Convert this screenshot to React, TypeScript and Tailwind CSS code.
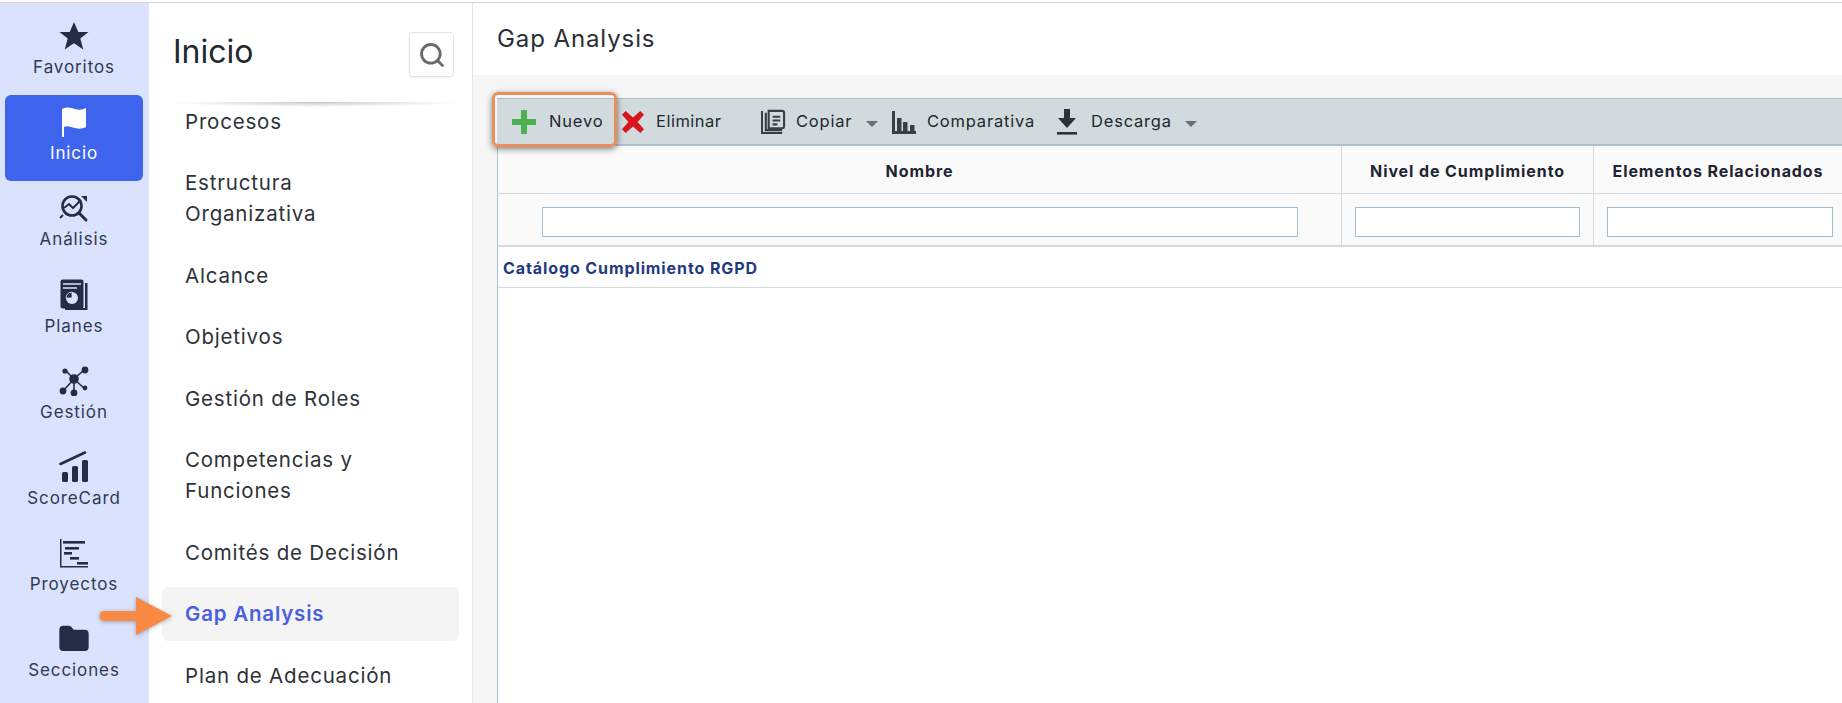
import { Search, Folder } from "lucide-react";

const font = "font-['Inter','Liberation_Sans',sans-serif]";

function StarIcon() {
  return (
    <svg viewBox="0 0 30 30" className="w-[30px] h-[30px]" fill="#252d44">
      <path d="M15 1l4.3 10h10.2l-8.2 6.6L24.300 28.500 15 22.300 5.700 28.500l3-10.900L.5 11h10.200z" />
    </svg>
  );
}

function FlagIcon() {
  return (
    <svg viewBox="0 0 26 32" className="w-[26px] h-[32px]" fill="#fff">
      <path d="M1 3c6-3 9-1 13 0s7 1 11-1v19c-4 2-7 2-11 1S6 19 3 21v10H1z" />
    </svg>
  );
}

function AnalisisIcon() {
  return (
    <svg viewBox="0 0 30 30" className="w-[30px] h-[30px]" fill="none" stroke="#252d44" strokeWidth="2.6">
      <circle cx="13" cy="13" r="9.5" />
      <path d="M20 20l7 7" strokeWidth="3" strokeLinecap="round" />
      <path d="M5 15l5-4 4 4 8-8" strokeWidth="2" />
      <path d="M22 3h6v6z" fill="#252d44" stroke="none" />
      <path d="M4 22l-3 3" strokeWidth="2" />
    </svg>
  );
}

function PlanesIcon() {
  return (
    <svg viewBox="0 0 28 32" className="w-[28px] h-[32px]">
      <path d="M25 4h2.500v27H5v-2h20z" fill="#252d44" />
      <rect x="0.5" y="0.5" width="23" height="29" rx="2" fill="#252d44" />
      <path d="M3 5h18M3 9h14" stroke="#dbe2fd" strokeWidth="1.4" />
      <circle cx="12" cy="19" r="6" fill="#dbe2fd" />
      <path d="M12 19v-6a6 6 0 0 0-6 6z" fill="#252d44" stroke="#dbe2fd" strokeWidth="0.8" />
    </svg>
  );
}

function GestionIcon() {
  return (
    <svg viewBox="0 0 30 30" className="w-[30px] h-[30px]" stroke="#252d44" strokeWidth="1.6" fill="#252d44">
      <path d="M15 13L6 4M15 13L26 3M15 13L4 25M15 13L15 26M15 13L26 23" />
      <circle cx="15" cy="13" r="4" />
      <circle cx="26" cy="4" r="2.6" />
      <circle cx="6" cy="5" r="1.8" />
      <circle cx="4" cy="25" r="2.6" />
      <circle cx="15" cy="27" r="2.6" />
      <circle cx="26" cy="22" r="1.6" />
    </svg>
  );
}

function ScoreIcon() {
  return (
    <svg viewBox="0 0 30 32" className="w-[30px] h-[32px]" fill="#252d44">
      <path d="M1.500 13L26 1.500" stroke="#252d44" strokeWidth="2.6" strokeLinecap="round" />
      <rect x="3" y="21" width="6" height="10" rx="1.5" />
      <rect x="13" y="15" width="6" height="16" rx="1.5" />
      <rect x="23" y="9" width="6" height="22" rx="1.5" />
    </svg>
  );
}

function ProyectosIcon() {
  return (
    <svg viewBox="0 0 30 30" className="w-[30px] h-[30px]" fill="#252d44">
      <path d="M1 1h1.500v27H29v1.500H1z" />
      <rect x="4" y="3" width="22" height="2.6" />
      <rect x="6" y="9" width="14" height="2.6" />
      <rect x="5" y="14" width="8" height="2.6" />
      <rect x="11" y="19" width="9" height="2.6" />
      <rect x="18" y="24" width="11" height="2.6" />
    </svg>
  );
}

const railItems = [
  { label: "Favoritos", icon: <StarIcon /> },
  { label: "Inicio", icon: <FlagIcon />, active: true },
  { label: "Análisis", icon: <AnalisisIcon /> },
  { label: "Planes", icon: <PlanesIcon /> },
  { label: "Gestión", icon: <GestionIcon /> },
  { label: "ScoreCard", icon: <ScoreIcon /> },
  { label: "Proyectos", icon: <ProyectosIcon /> },
  { label: "Secciones", icon: <Folder className="w-[32px] h-[32px]" fill="#252d44" stroke="#252d44" /> },
];

const navItems = [
  "Procesos",
  "Estructura Organizativa",
  "Alcance",
  "Objetivos",
  "Gestión de Roles",
  "Competencias y Funciones",
  "Comités de Decisión",
  "Gap Analysis",
  "Plan de Adecuación",
];

function Caret() {
  return <span className="ml-[14px] w-0 h-0 border-x-[6px] border-x-transparent border-t-[6px] border-t-[#68717a] mt-1" />;
}

function Toolbar() {
  return (
    <div className="relative h-[48px] bg-[#d1dadd] border-y-2 border-[#b0c0ca] border-t-[1px] flex items-center text-[16.5px] tracking-[0.8px] whitespace-nowrap text-[#23272e] pl-[15px]">
      {/* Nuevo */}
      <svg viewBox="0 0 24 24" className="w-[24px] h-[24px]" fill="#4fae4f">
        <path d="M9 0h6v9h9v6h-9v9H9v-9H0V9h9z" />
      </svg>
      <span className="ml-[13px] w-[53px]">Nuevo</span>
      {/* Eliminar */}
      <svg viewBox="0 0 24 24" className="ml-[20px] w-[22px] h-[22px]" fill="#d8141c">
        <path d="M4 0l8 7 8-7 4 4-7 8 7 8-4 4-8-7-8 7-4-4 7-8-7-8z" />
      </svg>
      <span className="ml-[12px] w-[64px] tracking-[0.5px]">Eliminar</span>
      {/* Copiar */}
      <svg viewBox="0 0 26 26" className="ml-[41px] w-[25px] h-[25px]" fill="none" stroke="#3a3f45" strokeWidth="2.2">
        <path d="M8 2h14a2 2 0 0 1 2 2v14a2 2 0 0 1-2 2H8z" />
        <path d="M5 4v18h17M1 2v23h21" />
        <path d="M12 8h8M12 12h8M12 16h5" />
      </svg>
      <span className="ml-[10px] w-[56px]">Copiar</span>
      <Caret />
      {/* Comparativa */}
      <svg viewBox="0 0 24 24" className="ml-[14px] w-[24px] h-[24px]" fill="#3a3f45">
        <path d="M0 1h3v20h21v3H0z" />
        <rect x="5" y="8" width="4.500" height="13" />
        <rect x="11" y="12" width="4.500" height="9" />
        <rect x="18" y="15" width="4.500" height="6" />
      </svg>
      <span className="ml-[11px] w-[110px]">Comparativa</span>
      {/* Descarga */}
      <svg viewBox="0 0 20 26" className="ml-[20px] w-[20px] h-[26px]" fill="#2e3238">
        <path d="M7 0h6v9h6l-9 10L1 9h6z" />
        <rect x="0" y="23" width="20" height="2.6" />
      </svg>
      <span className="ml-[14px] w-[80px]">Descarga</span>
      <Caret />
      {/* Resaltado sobre Nuevo */}
      <div className="absolute left-[-5px] top-[-7px] w-[125px] h-[55px] border-[3px] border-[#e98f5b] rounded-[6px] shadow-[0_2px_6px_rgba(0,0,0,0.5)]" />
    </div>
  );
}

export default function App() {
  return (
    <div className={`relative h-[703px] w-[1842px] overflow-hidden bg-white ${font} flex flex-col`}>
      <div className="h-[3px] shrink-0 border-b border-[#d4d6d8]" />
      <div className="flex flex-1 min-h-0">
        {/* Rail */}
        <aside className="w-[149px] shrink-0 bg-[#dbe2fd] pt-[6px]">
          {railItems.map((it) => (
            <div
              key={it.label}
              className={`ml-[5px] mr-[6px] h-[86.2px] rounded-md flex flex-col items-center pt-[10px] ${
                it.active ? "bg-[#3e64ee] text-white" : "text-[#2f3a52]"
              }`}
            >
              <div className="h-[34px] flex items-center justify-center">{it.icon}</div>
              <span className="mt-[2px] text-[17px] tracking-[0.9px] leading-[24px]">{it.label}</span>
            </div>
          ))}
        </aside>

        {/* Submenu */}
        <nav className="w-[324px] shrink-0 border-r border-[#e4e5e7] flex flex-col min-h-0">
          <div className="h-[99px] shrink-0 flex items-start justify-between pl-[24px] pr-[18px]">
            <h1 className="mt-[29px] text-[32px] leading-[40px] text-[#23272e]">Inicio</h1>
            <button className="mt-[29px] w-[45px] h-[45px] rounded-[4px] border border-[#e2e3e5] flex items-center justify-center shadow-[0_1px_2px_rgba(0,0,0,0.06)]">
              <Search className="w-[28px] h-[28px] text-[#666a6e]" strokeWidth={2.4} />
            </button>
          </div>
          <div className="relative flex-1 min-h-0 overflow-hidden">
            <div className="absolute top-0 left-[16px] right-[6px] h-[5px] bg-[radial-gradient(ellipse_at_top,rgba(0,0,0,0.22),rgba(0,0,0,0)_70%)] z-10" />
            <div className="-mt-[8px] px-[13px]">
              {navItems.map((label) => (
                <div
                  key={label}
                  className={`mb-[7.5px] rounded-md pl-[23px] pr-[40px] py-[11.5px] text-[20.5px] tracking-[0.8px] leading-[31px] ${
                    label === "Gap Analysis" ? "bg-[#f4f4f5] text-[#4a60e0] font-semibold" : "text-[#2e3238]"
                  }`}
                >
                  {label}
                </div>
              ))}
            </div>
          </div>
        </nav>

        {/* Main */}
        <main className="flex-1 min-w-0 flex flex-col bg-[#f6f6f6]">
          <div className="h-[72px] shrink-0 bg-white pl-[24px] pt-[20px]">
            <h2 className="text-[24px] tracking-[0.9px] leading-[32px] text-[#2b2f36]">Gap Analysis</h2>
          </div>
          <div className="flex-1 min-h-0 pl-[24px] pt-[23px] flex flex-col">
            <Toolbar />
            <div className="flex-1 bg-white border-l border-[#a8c2d0]">
              <div className="grid grid-cols-[844px_252px_1fr] bg-[#fafafa] text-[16px] tracking-[0.9px] font-bold text-[#1f2433]">
                <div className="h-[48px] pt-[2px] flex items-center justify-center border-b border-r border-[#d5dadd]">Nombre</div>
                <div className="h-[48px] pt-[2px] flex items-center justify-center border-b border-r border-[#d5dadd]">Nivel de Cumplimiento</div>
                <div className="h-[48px] pt-[2px] flex items-center justify-center border-b border-[#d5dadd]">Elementos Relacionados</div>
                <div className="h-[53px] pt-[13px] flex items-start justify-center border-b-2 border-r border-[#d5dadd]">
                  <input className="w-[756px] h-[30px] bg-white border border-[#a5bccb]" />
                </div>
                <div className="h-[53px] pt-[13px] flex items-start justify-center border-b-2 border-r border-[#d5dadd]">
                  <input className="w-[225px] h-[30px] bg-white border border-[#a5bccb]" />
                </div>
                <div className="h-[53px] pt-[13px] flex items-start border-b-2 border-[#d5dadd] pl-[13px]">
                  <input className="w-[226px] h-[30px] bg-white border border-[#a5bccb]" />
                </div>
              </div>
              <div className="h-[41px] pt-[1px] flex items-center bg-white border-b border-[#d5dadd] pl-[5px] text-[16px] tracking-[0.9px] font-bold text-[#1f3a80]">
                Catálogo Cumplimiento RGPD
              </div>
            </div>
          </div>
        </main>
      </div>

      {/* Flecha */}
      <svg viewBox="0 0 72 38" className="absolute left-[100px] top-[597px] w-[72px] h-[38px] drop-shadow-[0_1px_2px_rgba(0,0,0,0.3)]" fill="#f98a45">
        <path d="M4 14h32V0l36 19-36 19V24H4a5 5 0 0 1 0-10z" />
      </svg>
    </div>
  );
}
